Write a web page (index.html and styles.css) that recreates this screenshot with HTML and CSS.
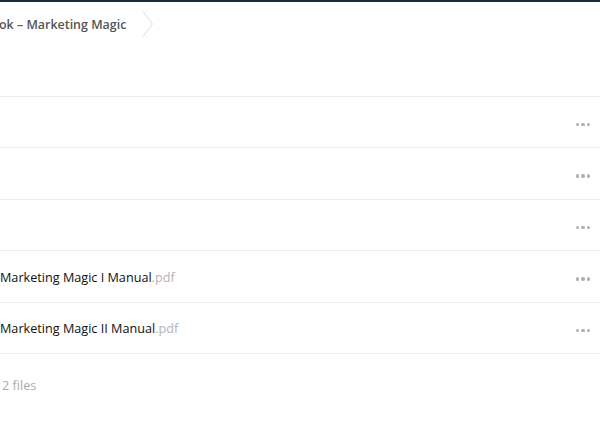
FILE: index.html
```html
<!DOCTYPE html>
<html>
<head>
<meta charset="utf-8">
<link rel="stylesheet" href="styles.css">
</head>
<body>
<div class="topbar"></div>
<div class="crumbs">
  <span class="crumb">ok – Marketing Magic</span>
  <svg class="chev" width="12" height="26" viewBox="0 0 12 26"><path d="M1 0.5 L10.5 13 L1 25.5" fill="none" stroke="#dcdcdc" stroke-width="1"/></svg>
</div>
<div class="list">
  <div class="row"><span class="name"></span><span class="dots"><i></i><i></i><i></i></span></div>
  <div class="row"><span class="name"></span><span class="dots"><i></i><i></i><i></i></span></div>
  <div class="row"><span class="name"></span><span class="dots"><i></i><i></i><i></i></span></div>
  <div class="row"><span class="name">Marketing Magic I Manual<span class="ext">.pdf</span></span><span class="dots"><i></i><i></i><i></i></span></div>
  <div class="row"><span class="name">Marketing Magic II Manual<span class="ext">.pdf</span></span><span class="dots"><i></i><i></i><i></i></span></div>
</div>
<div class="summary">2 files</div>
</body>
</html>
```
FILE: styles.css
```css
html, body { margin: 0; padding: 0; background: #fff; }
body { font-family: "Open Sans", sans-serif; width: 600px; height: 426px; overflow: hidden; }
.topbar { height: 2px; background: #1d2a3a; }
.crumbs { display: flex; align-items: center; height: 44px; }
.crumb { font-size: 12.45px; font-weight: 600; color: #555; margin-left: -1px; }
.chev { margin-left: 16px; }
.list { margin-top: 50px; border-top: 1px solid #ededed; }
.row { box-sizing: border-box; height: 51.4px; border-bottom: 1px solid #ededed; display: flex; align-items: center; justify-content: space-between; }
.name { font-size: 12.65px; color: #111; padding-top: 1px; }
.ext { color: #b3b3b3; }
.dots { display: flex; gap: 2px; margin-right: 10px; margin-top: 5px; }
.dots i { width: 3.5px; height: 3.5px; border-radius: 50%; background: #b0b0b0; display: block; }
.summary { font-size: 12.65px; color: #aaa; padding-left: 2px; margin-top: 22px; }
```
